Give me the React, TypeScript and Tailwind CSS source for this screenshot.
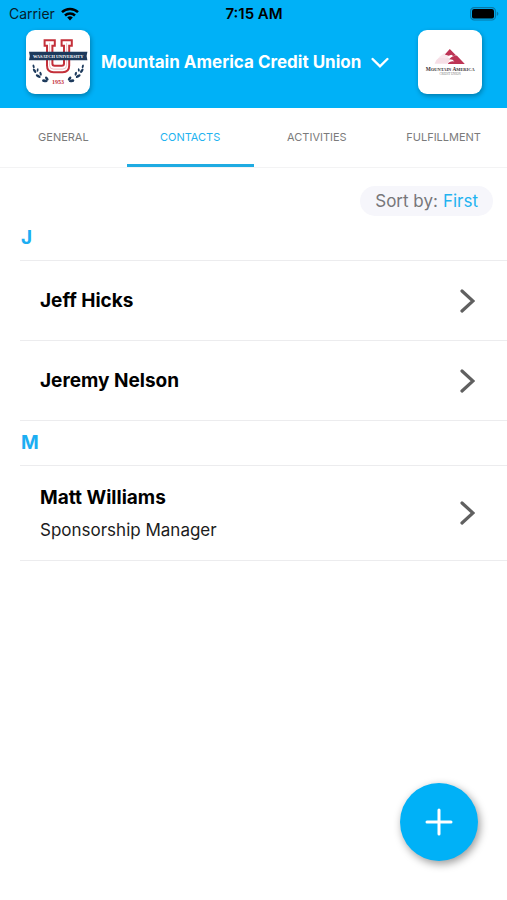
import { useState } from "react";

type Contact = {
    name: string;
    title?: string;
};

const tabs = ["General", "Contacts", "Activities", "Fulfillment"];

const sections: { letter: string; contacts: Contact[] }[] = [
    { letter: "J", contacts: [{ name: "Jeff Hicks" }, { name: "Jeremy Nelson" }] },
    { letter: "M", contacts: [{ name: "Matt Williams", title: "Sponsorship Manager" }] },
];

// one side of the laurel under the U, the other side is mirrored
function Laurel() {
    return (
        <g fill="#1d3a5c">
            <ellipse cx="7.6" cy="36.4" rx="1" ry="1.9" transform="rotate(-12 7.6 36.4)" />
            <ellipse cx="8.6" cy="40.8" rx="1.2" ry="2.5" transform="rotate(-35 8.6 40.8)" />
            <ellipse cx="11.6" cy="40" rx="0.9" ry="1.8" transform="rotate(10 11.6 40)" />
            <ellipse cx="12.2" cy="46.2" rx="1.3" ry="2.7" transform="rotate(-60 12.2 46.2)" />
            <ellipse cx="14.6" cy="43.8" rx="1.1" ry="2" transform="rotate(-15 14.6 43.8)" />
            <ellipse cx="18.8" cy="50.8" rx="1.4" ry="2.8" transform="rotate(-82 18.8 50.8)" />
            <ellipse cx="20.8" cy="48.6" rx="1.3" ry="2.3" transform="rotate(-40 20.8 48.6)" />
        </g>
    );
}

function UniversityLogo() {
    return (
        <svg viewBox="0 0 64 64" className="size-full" aria-hidden="true">
            <path
                d="M18.6 10.3h10.2v5.4h-2.4v17.9q0 2.2 2.2 2.2h7.2q2.2 0 2.2-2.2V15.7h-2.4v-5.4h10.2v5.4h-2.6v19.8q0 6.7-6.6 6.7h-9q-6.6 0-6.6-6.7V15.7h-2.4z"
                fill="#fff"
                stroke="#c4303a"
                strokeWidth="2"
            />
            <path d="M23.6 12.8v22.7q0 3.6 4 3.6h9q4 0 4-3.6V12.8" fill="none" stroke="#c4303a" strokeOpacity="0.3" strokeWidth="1" />
            <path d="M3 21.8h58.4l-.8 4.2.8 4.2H3l.8-4.2z" fill="#1d3a5c" />
            <text x="32.2" y="27.6" textAnchor="middle" fontSize="4.4" fontWeight="700" fill="#fff" className="font-['Liberation_Serif',serif]">
                WASATCH UNIVERSITY
            </text>
            <Laurel />
            <g transform="translate(64.4 0) scale(-1 1)">
                <Laurel />
            </g>
            <text x="32" y="53.6" textAnchor="middle" fontSize="6" fontWeight="700" fill="#c4303a" className="font-['Liberation_Serif',serif]">
                1953
            </text>
        </svg>
    );
}

function CreditUnionLogo() {
    return (
        <svg viewBox="0 0 64 64" className="size-full" aria-hidden="true">
            <path d="M16.6 33.8q1.2-4.2 4.6-6.2 3.2-2 7-1.6l4 3.2-2.6 4.6z" fill="#f6dfe6" />
            <path d="M20.4 27.6l6-4.6 4.8 2.4-2 3z" fill="#f9e8ed" />
            <path d="M31.8 19l6.4 6.4-3 .6-2-1.2-2.4 1-4-1.2z" fill="#bd3455" />
            <path d="M38.8 25.6l8 8.4H29.8q1.6-3.2 6.6-2.6-1.6-2.4-5.2-2.2 2.6-3.2 7.6-3.6z" fill="#bd3455" />
            <text x="32.2" y="40.6" textAnchor="middle" fontSize="5.4" fontWeight="700" fill="#3a3335" className="font-['Liberation_Serif',serif]">
                M<tspan fontSize="4.4">OUNTAIN </tspan>A<tspan fontSize="4.4">MERICA</tspan>
            </text>
            <text x="32" y="44.6" textAnchor="middle" fontSize="3" fill="#77777b" className="font-['Liberation_Serif',serif]">
                CREDIT  UNION
            </text>
        </svg>
    );
}

function StatusBar() {
    return (
        <div className="grid h-7 grid-cols-3 items-center pr-2 pl-[9px] text-sm text-[#06202c]">
            <div className="flex items-center gap-[6px]">
                <span>Carrier</span>
                <svg viewBox="0 0 18 14" className="h-[14px] w-[18px]" fill="none" stroke="#000" strokeWidth="2.5" aria-hidden="true">
                    <path d="M1 5.2a11.4 11.4 0 0 1 16 0" />
                    <path d="M4 8.5a7.2 7.2 0 0 1 10 0" />
                    <path d="M9 13.4L6.2 10.6a4 4 0 0 1 5.6 0z" fill="#000" stroke="none" />
                </svg>
            </div>
            <span className="text-center text-[15px] font-semibold text-black">7:15 AM</span>
            <svg viewBox="0 0 29 14" className="h-[14px] w-[29px] justify-self-end" aria-hidden="true">
                <rect x="0.6" y="0.6" width="24.8" height="12.4" rx="3.6" fill="none" stroke="#0779a8" strokeWidth="1.2" />
                <rect x="2" y="2" width="22" height="9.6" rx="2.2" fill="#000" />
                <path d="M26.8 4.6q1.6.8 1.6 2.2t-1.6 2.2z" fill="#0779a8" />
            </svg>
        </div>
    );
}

function ContactRow({ name, title }: Contact) {
    return (
        <li className="ml-5 border-b border-[#ececee]">
            <button
                type="button"
                className={`flex w-full items-center justify-between pr-8 pl-5 text-left ${title ? "h-[94px]" : "h-[79px]"}`}
            >
                <span className="flex flex-col gap-1 pt-px">
                    <span className="text-[19px] leading-7 font-bold text-black">{name}</span>
                    {title && <span className="text-[17px] leading-7 text-[#1c1c1c]">{title}</span>}
                </span>
                <svg viewBox="0 0 15 24" className="h-6 w-[15px]" fill="none" stroke="#606060" strokeWidth="3.2" strokeLinecap="round" aria-hidden="true">
                    <path d="M2 2l11 10-11 10" />
                </svg>
            </button>
        </li>
    );
}

export default function App() {
    const [activeTab, setActiveTab] = useState("Contacts");

    return (
        <div className="min-h-screen bg-white font-['Inter',sans-serif]">
            <header className="bg-[#00b1f7] pb-[14px]">
                <StatusBar />
                <div className="flex items-center justify-between pt-[2px] pr-[25px] pl-[26px]">
                    <div className="flex items-center gap-[11px]">
                        <div className="size-16 shrink-0 overflow-hidden rounded-[9px] bg-white shadow-[1px_2px_5px_rgba(0,0,0,0.3)]">
                            <UniversityLogo />
                        </div>
                        <button type="button" className="flex items-center gap-[10px] pt-[2px] text-[17px] font-bold whitespace-nowrap text-white">
                            Mountain America Credit Union
                            <svg viewBox="0 0 18 12" className="h-3 w-[18px]" fill="none" stroke="#fff" strokeWidth="2.4" strokeLinecap="round" aria-hidden="true">
                                <path d="M1.6 2l7.4 7.4 7.4-7.4" />
                            </svg>
                        </button>
                    </div>
                    <div className="size-16 shrink-0 overflow-hidden rounded-[9px] bg-white shadow-[1px_2px_5px_rgba(0,0,0,0.3)]">
                        <CreditUnionLogo />
                    </div>
                </div>
            </header>

            <nav className="flex border-b border-[#f3f3f4]">
                {tabs.map((tab) => (
                    <button
                        key={tab}
                        type="button"
                        onClick={() => setActiveTab(tab)}
                        className={`h-[59px] flex-1 basis-0 border-b-[3px] pt-[3px] text-[11px] uppercase ${
                            tab === activeTab ? "border-[#1fabe2] text-[#22b3f0]" : "border-transparent text-[#7b7b7b]"
                        }`}
                    >
                        {tab}
                    </button>
                ))}
            </nav>

            <main>
                <div className="flex justify-end pt-[18px] pr-[14px]">
                    <button type="button" className="flex h-[30px] items-center gap-[5px] rounded-full bg-[#f6f6fb] px-[15px] pt-px text-[17px] text-[#77777a]">
                        Sort by: <span className="text-[#22b3f0]">First</span>
                    </button>
                </div>
                {sections.map((section) => (
                    <section key={section.letter}>
                        <h2 className="ml-5 flex h-[45px] items-center border-b border-[#ececee] pt-px pl-px text-[19px] font-bold text-[#1caef2]">
                            {section.letter}
                        </h2>
                        <ul>
                            {section.contacts.map((contact) => (
                                <ContactRow key={contact.name} {...contact} />
                            ))}
                        </ul>
                    </section>
                ))}
            </main>

            <button
                type="button"
                aria-label="Add contact"
                className="fixed right-[29px] bottom-[39px] flex size-[78px] items-center justify-center rounded-full bg-[#00b1f7] shadow-[2px_3px_8px_rgba(0,0,0,0.4)]"
            >
                <svg viewBox="0 0 28 28" className="size-7" fill="none" stroke="#fff" strokeWidth="3" strokeLinecap="round" aria-hidden="true">
                    <path d="M14 2v24M2 14h24" />
                </svg>
            </button>
        </div>
    );
}
